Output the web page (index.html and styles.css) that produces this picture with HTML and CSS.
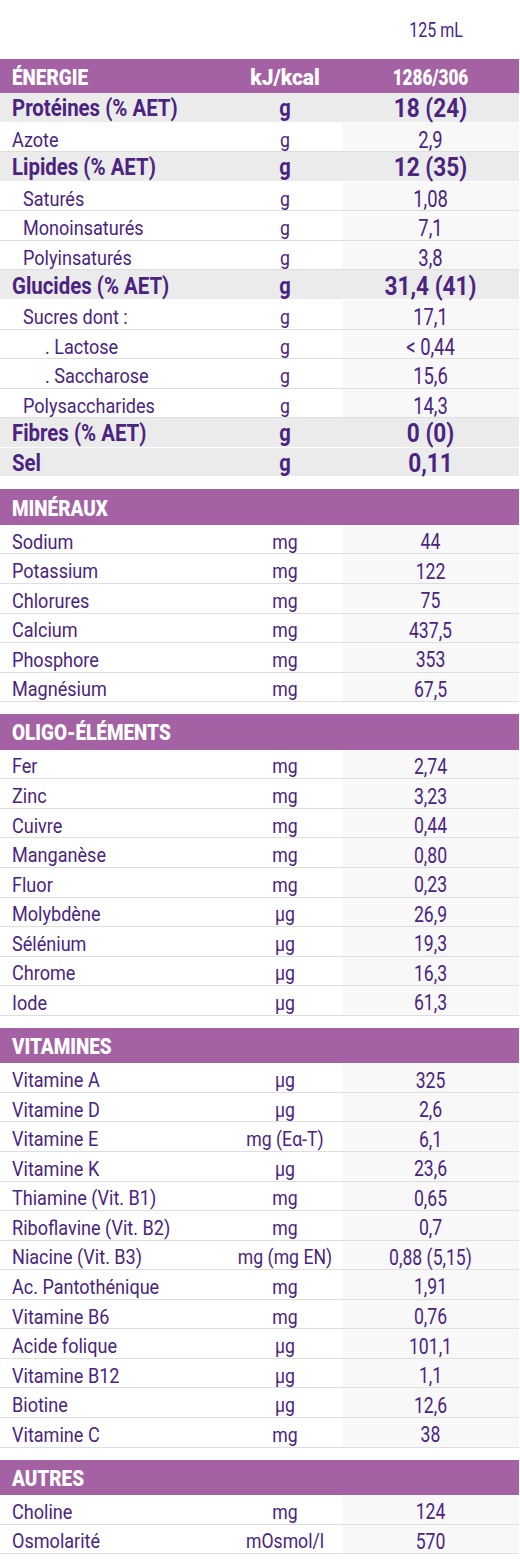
FILE: index.html
```html
<!DOCTYPE html>
<html lang="fr">
<head>
<meta charset="utf-8">
<link rel="stylesheet" href="styles.css">
</head>
<body>
<div class="sheet">
  <div class="volume"><span>125 mL</span></div>

  <div class="group energy">
    <div class="head head-energy"><span class="c1">ÉNERGIE</span><span class="c2">kJ/kcal</span><span class="c3">1286/306</span></div>
    <div class="row strong"><span class="c1">Protéines (% AET)</span><span class="c2">g</span><span class="c3">18 (24)</span></div>
    <div class="row"><span class="c1">Azote</span><span class="c2">g</span><span class="c3">2,9</span></div>
    <div class="row strong"><span class="c1">Lipides (% AET)</span><span class="c2">g</span><span class="c3">12 (35)</span></div>
    <div class="row"><span class="c1 in1">Saturés</span><span class="c2">g</span><span class="c3">1,08</span></div>
    <div class="row"><span class="c1 in1">Monoinsaturés</span><span class="c2">g</span><span class="c3">7,1</span></div>
    <div class="row"><span class="c1 in1">Polyinsaturés</span><span class="c2">g</span><span class="c3">3,8</span></div>
    <div class="row strong"><span class="c1">Glucides (% AET)</span><span class="c2">g</span><span class="c3">31,4 (41)</span></div>
    <div class="row"><span class="c1 in1">Sucres dont :</span><span class="c2">g</span><span class="c3">17,1</span></div>
    <div class="row"><span class="c1 in2">. Lactose</span><span class="c2">g</span><span class="c3">&lt; 0,44</span></div>
    <div class="row"><span class="c1 in2">. Saccharose</span><span class="c2">g</span><span class="c3">15,6</span></div>
    <div class="row"><span class="c1 in1">Polysaccharides</span><span class="c2">g</span><span class="c3">14,3</span></div>
    <div class="row strong"><span class="c1">Fibres (% AET)</span><span class="c2">g</span><span class="c3">0 (0)</span></div>
    <div class="row strong"><span class="c1">Sel</span><span class="c2">g</span><span class="c3">0,11</span></div>
  </div>

  <div class="group">
    <div class="head"><span class="c1">MINÉRAUX</span></div>
    <div class="row"><span class="c1">Sodium</span><span class="c2">mg</span><span class="c3">44</span></div>
    <div class="row"><span class="c1">Potassium</span><span class="c2">mg</span><span class="c3">122</span></div>
    <div class="row"><span class="c1">Chlorures</span><span class="c2">mg</span><span class="c3">75</span></div>
    <div class="row"><span class="c1">Calcium</span><span class="c2">mg</span><span class="c3">437,5</span></div>
    <div class="row"><span class="c1">Phosphore</span><span class="c2">mg</span><span class="c3">353</span></div>
    <div class="row"><span class="c1">Magnésium</span><span class="c2">mg</span><span class="c3">67,5</span></div>
  </div>

  <div class="group">
    <div class="head"><span class="c1">OLIGO-ÉLÉMENTS</span></div>
    <div class="row"><span class="c1">Fer</span><span class="c2">mg</span><span class="c3">2,74</span></div>
    <div class="row"><span class="c1">Zinc</span><span class="c2">mg</span><span class="c3">3,23</span></div>
    <div class="row"><span class="c1">Cuivre</span><span class="c2">mg</span><span class="c3">0,44</span></div>
    <div class="row"><span class="c1">Manganèse</span><span class="c2">mg</span><span class="c3">0,80</span></div>
    <div class="row"><span class="c1">Fluor</span><span class="c2">mg</span><span class="c3">0,23</span></div>
    <div class="row"><span class="c1">Molybdène</span><span class="c2">µg</span><span class="c3">26,9</span></div>
    <div class="row"><span class="c1">Sélénium</span><span class="c2">µg</span><span class="c3">19,3</span></div>
    <div class="row"><span class="c1">Chrome</span><span class="c2">µg</span><span class="c3">16,3</span></div>
    <div class="row"><span class="c1">Iode</span><span class="c2">µg</span><span class="c3">61,3</span></div>
  </div>

  <div class="group">
    <div class="head"><span class="c1">VITAMINES</span></div>
    <div class="row"><span class="c1">Vitamine A</span><span class="c2">µg</span><span class="c3">325</span></div>
    <div class="row"><span class="c1">Vitamine D</span><span class="c2">µg</span><span class="c3">2,6</span></div>
    <div class="row"><span class="c1">Vitamine E</span><span class="c2">mg (Eα-T)</span><span class="c3">6,1</span></div>
    <div class="row"><span class="c1">Vitamine K</span><span class="c2">µg</span><span class="c3">23,6</span></div>
    <div class="row"><span class="c1">Thiamine (Vit. B1)</span><span class="c2">mg</span><span class="c3">0,65</span></div>
    <div class="row"><span class="c1">Riboflavine (Vit. B2)</span><span class="c2">mg</span><span class="c3">0,7</span></div>
    <div class="row"><span class="c1">Niacine (Vit. B3)</span><span class="c2">mg (mg EN)</span><span class="c3">0,88 (5,15)</span></div>
    <div class="row"><span class="c1">Ac. Pantothénique</span><span class="c2">mg</span><span class="c3">1,91</span></div>
    <div class="row"><span class="c1">Vitamine B6</span><span class="c2">mg</span><span class="c3">0,76</span></div>
    <div class="row"><span class="c1">Acide folique</span><span class="c2">µg</span><span class="c3">101,1</span></div>
    <div class="row"><span class="c1">Vitamine B12</span><span class="c2">µg</span><span class="c3">1,1</span></div>
    <div class="row"><span class="c1">Biotine</span><span class="c2">µg</span><span class="c3">12,6</span></div>
    <div class="row"><span class="c1">Vitamine C</span><span class="c2">mg</span><span class="c3">38</span></div>
  </div>

  <div class="group">
    <div class="head"><span class="c1">AUTRES</span></div>
    <div class="row"><span class="c1">Choline</span><span class="c2">mg</span><span class="c3">124</span></div>
    <div class="row"><span class="c1">Osmolarité</span><span class="c2">mOsmol/l</span><span class="c3">570</span></div>
  </div>
</div>
</body>
</html>
```

FILE: styles.css
```css
html, body {
  margin: 0;
  padding: 0;
  background: #ffffff;
}
.sheet {
  width: 519px;
  font-family: "Roboto", "Liberation Sans", sans-serif;
  color: #4a2480;
  font-size: 21px;
  line-height: 1;
}
.volume {
  height: 59px;
  display: grid;
  grid-template-columns: 342px 1fr;
  align-items: center;
}
.volume span {
  grid-column: 2;
  text-align: center;
  padding-left: 14px;
  font-size: 20px;
  transform: scaleX(0.8);
}
.group {
  margin-top: 12px;
}
.group.energy {
  margin-top: 0;
}
.head,
.row {
  display: grid;
  grid-template-columns: 228px 114px 1fr;
  align-items: center;
  box-sizing: border-box;
}
.head {
  height: 35.5px;
  background: #a462a4;
  color: #ffffff;
  font-weight: 900;
  font-size: 22px;
  padding-top: 3px;
}
.head-energy {
  height: 34px;
}
.row {
  height: 29.57px;
  border-bottom: 1.5px solid #dedede;
  background: linear-gradient(to right, #ffffff 342px, #f8f8f8 342px);
  padding-top: 6px;
}
.row.strong {
  background: #ebebeb;
  border-bottom: 1.5px solid #ffffff;
  font-weight: 700;
  font-size: 24px;
  padding-top: 2px;
}
.c1 {
  padding-left: 12px;
  white-space: nowrap;
  transform: scaleX(0.86);
  transform-origin: 12px 50%;
}
.c1.in1 { padding-left: 23px; transform-origin: 23px 50%; }
.c1.in2 { padding-left: 45px; transform-origin: 45px 50%; }
.c2, .c3 {
  text-align: center;
  white-space: nowrap;
  transform: scaleX(0.84);
}
.row .c3 { font-size: 22px; transform: scaleX(0.8); }
.energy .row .c3 { font-size: 23px; transform: scaleX(0.8); }
.row.strong .c1 { transform: scaleX(0.85); }
.energy .row.strong .c3 { font-size: 26px; transform: scaleX(0.87); }
.head .c1 { transform: scaleX(0.86); }
.head .c2 { transform: scaleX(0.95); }
.head .c3 { transform: scaleX(0.78); }
```
